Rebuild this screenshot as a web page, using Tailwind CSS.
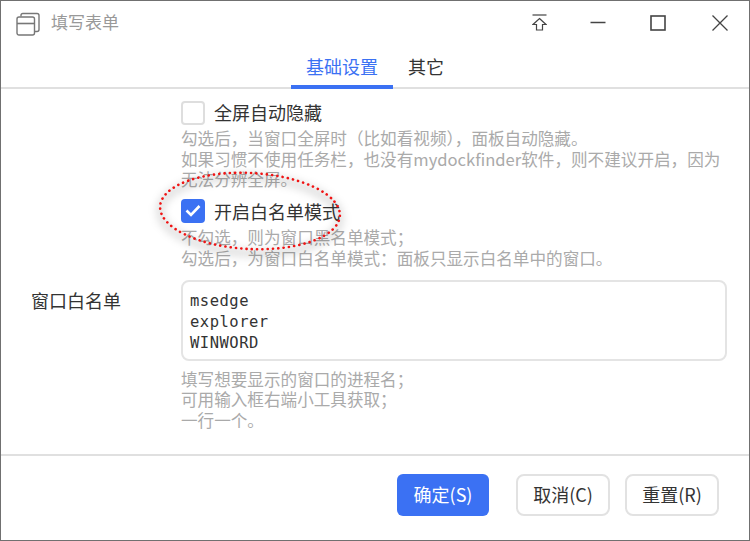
<!DOCTYPE html>
<html lang="zh">
<head>
<meta charset="UTF-8">
<title>填写表单</title>
<script src="https://cdn.jsdelivr.net/npm/@tailwindcss/browser@4"></script>
</head>
<body class="bg-white">
<div class="relative w-[750px] h-[541px] overflow-hidden flex flex-col border border-[#707070] bg-white font-['Noto_Sans_CJK_SC','Noto_Sans',sans-serif] text-[#333]">
  <!-- title bar -->
  <div class="h-[45px] flex items-center pl-[15px] shrink-0">
    <svg width="24" height="24" viewBox="0 0 24 24" fill="none" stroke="#777" stroke-width="1.4"><path d="M5 4.500V3.200Q5 1.500 6.800 1.500H21Q23 1.500 23 3.500V17.500Q23 19.500 21 19.500H18.500"/><rect x="1" y="5" width="17.500" height="18" rx="2"/><path d="M1 11.500H18.500" stroke-width="1.600"/></svg>
    <span class="ml-[11px] mb-[3px] text-[17px] text-[#999]">填写表单</span>
    <div class="ml-auto flex items-center mb-[2px]">
      <svg class="mr-[43px]" width="15" height="17" viewBox="0 0 15 17" fill="none" stroke="#444" stroke-width="1.200"><path d="M0.500 1H14.500"/><path d="M7.500 4.500L14 10.500H10.500V16H4.500V10.500H1Z"/></svg>
      <svg class="mr-[44px]" width="16" height="16" viewBox="0 0 16 16" stroke="#444" stroke-width="1.500"><path d="M0.500 7.500H15.500"/></svg>
      <svg class="mr-[46px]" width="16" height="16" viewBox="0 0 16 16" fill="none" stroke="#444" stroke-width="1.600"><rect x="1" y="1" width="14" height="14"/></svg>
      <svg class="mr-[21px]" width="16" height="16" viewBox="0 0 16 16" stroke="#444" stroke-width="1.300"><path d="M0.500 0.500L15.500 15.500M15.500 0.500L0.500 15.500"/></svg>
    </div>
  </div>
  <!-- tabs -->
  <div class="h-[43px] flex justify-center border-b-2 border-[#e0e0e0] shrink-0">
    <div class="h-[43px] w-[102px] flex items-start justify-center border-b-[4px] border-[#3b71f3] text-[#3b71f3] text-[18px] leading-[26px] pt-[7px]">基础设置</div>
    <div class="w-[66px] flex items-start justify-center text-[18px] leading-[26px] text-[#333] pt-[7px]">其它</div>
  </div>
  <!-- form -->
  <div class="flex-1 flex pt-[12px]">
    <div class="w-[180px] shrink-0 pl-[30px] pt-[186px] text-[18px] leading-[26px] text-[#333]">窗口白名单</div>
    <div class="w-[546px]">
      <label class="flex items-center h-[24px] text-[18px]">
        <span class="w-[24px] h-[24px] rounded-[4px] border-2 border-[#dedede] bg-white"></span>
        <span class="ml-[9px] mb-[1px]">全屏自动隐藏</span>
      </label>
      <p class="mt-[3px] text-[16.600px] leading-[20.500px] text-[#aaa] whitespace-nowrap">勾选后，当窗口全屏时（比如看视频），面板自动隐藏。<br>如果习惯不使用任务栏，也没有mydockfinder软件，则不建议开启，因为<br>无法分辨全屏。</p>
      <label class="flex items-center h-[24px] mt-[9px] text-[18px]">
        <span class="w-[24px] h-[24px] rounded-[4px] bg-[#3b71f3] flex items-center justify-center">
          <svg width="16" height="13" viewBox="0 0 16 13" fill="none" stroke="#fff" stroke-width="2.600"><path d="M1.500 6.500L6 11L14.500 2"/></svg>
        </span>
        <span class="ml-[9px] mt-[1px]">开启白名单模式</span>
      </label>
      <p class="mt-[4px] text-[16.600px] leading-[21px] text-[#aaa] whitespace-nowrap">不勾选，则为窗口黑名单模式；<br>勾选后，为窗口白名单模式：面板只显示白名单中的窗口。</p>
      <div class="mt-[11px] h-[81px] rounded-[8px] border-2 border-[#e4e4e4] pl-[7px] pt-[9px] font-['DejaVu_Sans_Mono',monospace] text-[15.500px] tracking-[0.500px] leading-[21px] text-[#333]">msedge<br>explorer<br>WINWORD</div>
      <p class="mt-[8px] text-[16.600px] leading-[20.500px] text-[#aaa]">填写想要显示的窗口的进程名；<br>可用输入框右端小工具获取；<br>一行一个。</p>
    </div>
  </div>
  <!-- footer -->
  <div class="h-[86px] shrink-0 border-t-2 border-[#e0e0e0] flex justify-end gap-[28px] pt-[18px] pr-[30px] text-[18px]">
    <button class="w-[92px] h-[42px] rounded-[6px] bg-[#3b71f3] text-white -mr-[1px] pb-[2px]">确定(S)</button>
    <div class="flex gap-[15px]">
      <button class="w-[94px] h-[42px] rounded-[8px] border-2 border-[#e2e2e2] text-[#333] pb-[2px]">取消(C)</button>
      <button class="w-[94px] h-[42px] rounded-[8px] border-2 border-[#e2e2e2] text-[#333] pb-[2px]">重置(R)</button>
    </div>
  </div>
  <!-- hand-drawn ellipse annotation -->
  <svg class="absolute left-[139px] top-[159px]" width="225" height="110" viewBox="0 0 225 110" fill="none">
    <ellipse cx="110" cy="55" rx="90" ry="38" transform="rotate(3 110 55)" stroke="#000" stroke-opacity="0.16" stroke-width="6" style="filter:blur(4px)" />
    <ellipse cx="110" cy="51" rx="90" ry="38" transform="rotate(3 110 51)" stroke="#f01414" stroke-width="2.600" stroke-linecap="round" stroke-dasharray="0.100 5.200"/>
  </svg>
</div>
</body>
</html>
